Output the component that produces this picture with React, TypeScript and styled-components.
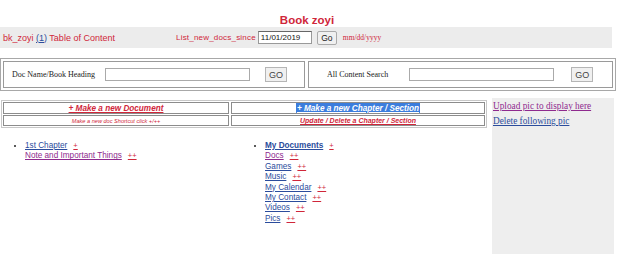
import styled, { createGlobalStyle } from "styled-components";

// ------------------ DATA ------------------
const myDocs = [
  { name: "Docs", visited: true },
  { name: "Games", visited: false },
  { name: "Music", visited: false },
  { name: "My Calendar", visited: false },
  { name: "My Contact", visited: false },
  { name: "Videos", visited: false },
  { name: "Pics", visited: false },
];

const RED = "#d0263a";
const BLUE = "#2b4c9c";
const PURPLE = "#8e2a8e";

// ------------------ PAGE ------------------
export default function App() {
  return (
    <>
      <GlobalStyle />
      <Page>
        <Title>Book zoyi</Title>

        <TopBar>
          <Crumbs>
            bk_zoyi <BlueLink>(1)</BlueLink> Table of Content
          </Crumbs>
          <SinceLabel>List_new_docs_since</SinceLabel>
          <DateInput defaultValue="11/01/2019" />
          <GoButton>Go</GoButton>
          <DateHint>mm/dd/yyyy</DateHint>
        </TopBar>

        <SearchTable>
          <SearchCell>
            <SearchLabel $indent={8}>Doc Name/Book Heading</SearchLabel>
            <SearchInput $left={10} />
            <SearchGo $left={15}>GO</SearchGo>
          </SearchCell>
          <SearchCell>
            <SearchLabel $indent={18}>All Content Search</SearchLabel>
            <SearchInput $left={21} />
            <SearchGo $left={17}>GO</SearchGo>
          </SearchCell>
        </SearchTable>

        <Body>
          <Main>
            <ActionGrid>
              <ActionCell>
                <BigAction>+ Make a new Document</BigAction>
              </ActionCell>
              <ActionCell>
                <BigAction $selected>+ Make a new Chapter / Section</BigAction>
              </ActionCell>
              <ActionCell>
                <SmallNote>Make a new doc Shortcut click +/++</SmallNote>
              </ActionCell>
              <ActionCell>
                <SmallAction>Update / Delete a Chapter / Section</SmallAction>
              </ActionCell>
            </ActionGrid>

            <Lists>
              <TreeList>
                <li>
                  <SubRow>
                    <NodeLink>1st Chapter</NodeLink>
                    <Plus>+</Plus>
                  </SubRow>
                  <SubRow>
                    <NodeLink $visited>Note and Important Things</NodeLink>
                    <Plus>++</Plus>
                  </SubRow>
                </li>
              </TreeList>
              <TreeList>
                <li>
                  <SubRow>
                    <NodeLink $bold>My Documents</NodeLink>
                    <Plus>+</Plus>
                  </SubRow>
                  {myDocs.map((d) => (
                    <SubRow key={d.name}>
                      <NodeLink $visited={d.visited}>{d.name}</NodeLink>
                      <Plus>++</Plus>
                    </SubRow>
                  ))}
                </li>
              </TreeList>
            </Lists>
          </Main>

          <PicPanel>
            <PicLink $visited>Upload pic to display here</PicLink>
            <PicLink>Delete following pic</PicLink>
          </PicPanel>
        </Body>
      </Page>
    </>
  );
}

// ------------------ STYLES ------------------
const GlobalStyle = createGlobalStyle`
  body {
    margin: 0;
    background: #fff;
    font-family: "Liberation Sans", Arial, sans-serif;
  }
`;

const Page = styled.div`
  width: 614px;
  padding-top: 13px;
`;

const Title = styled.h1`
  margin: 0;
  text-align: center;
  font-size: 11.5px;
  line-height: 14px;
  font-weight: bold;
  color: ${RED};
`;

const TopBar = styled.div`
  height: 21px;
  width: 612px;
  background: #ececec;
  display: flex;
  align-items: center;
  color: ${RED};
`;

const Crumbs = styled.span`
  margin-left: 3px;
  width: 173px;
  font-size: 9px;
`;

const BlueLink = styled.a`
  color: ${BLUE};
  text-decoration: underline;
`;

const SinceLabel = styled.span`
  font-size: 8px;
  letter-spacing: 0.2px;
`;

const DateInput = styled.input`
  margin-left: 2px;
  width: 48px;
  height: 9px;
  padding: 1px 2px;
  border: 1px solid #999;
  border-top-color: #666;
  font-family: "Liberation Sans", Arial, sans-serif;
  font-size: 8px;
  color: #111;
`;

const GoButton = styled.button`
  margin-left: 5px;
  width: 20px;
  height: 14px;
  padding: 0;
  border: 1px solid #aaa;
  border-radius: 2px;
  background: #f0f0f0;
  font-family: "Liberation Sans", Arial, sans-serif;
  font-size: 8.5px;
  color: #222;
`;

const DateHint = styled.span`
  margin-left: 6px;
  font-family: "Liberation Serif", "Times New Roman", serif;
  font-size: 7.5px;
`;

const SearchTable = styled.div`
  margin-top: 10px;
  width: 610px;
  height: 27px;
  padding: 2px;
  border: 1px solid #a8a8a8;
  display: grid;
  grid-template-columns: 302px 1fr;
  gap: 3px;
`;

const SearchCell = styled.div`
  border: 1px solid #9a9a9a;
  display: flex;
  align-items: center;
`;

const SearchLabel = styled.span<{ $indent: number }>`
  margin-left: ${(p) => p.$indent}px;
  font-family: "Liberation Serif", "Times New Roman", serif;
  font-size: 8px;
  color: #222;
`;

const SearchInput = styled.input<{ $left: number }>`
  margin-left: ${(p) => p.$left}px;
  width: 141px;
  height: 9px;
  padding: 1px;
  border: 1px solid #aaa;
`;

const SearchGo = styled.button<{ $left: number }>`
  margin-left: ${(p) => p.$left}px;
  width: 22px;
  height: 15px;
  padding: 0;
  border: 1px solid #b5b5b5;
  background: #f0f0f0;
  font-family: "Liberation Sans", Arial, sans-serif;
  font-size: 9px;
  color: #444;
`;

const Body = styled.div`
  margin-top: 8px;
  display: flex;
  align-items: flex-start;
`;

const Main = styled.div`
  width: 492px;
`;

const ActionGrid = styled.div`
  margin: 1px 0 0 1px;
  width: 482px;
  padding: 1px;
  border: 1px solid #c8c8c8;
  display: grid;
  grid-template-columns: 226px 1fr;
  grid-template-rows: 12px 11px;
  gap: 1px 2px;
`;

const ActionCell = styled.div`
  border: 1px solid #8c8c8c;
  display: flex;
  align-items: center;
  justify-content: center;
  overflow: hidden;
`;

const BigAction = styled.a<{ $selected?: boolean }>`
  font-size: 8.2px;
  line-height: 11px;
  font-weight: bold;
  font-style: italic;
  text-decoration: underline;
  color: ${(p) => (p.$selected ? "#fff" : RED)};
  background: ${(p) => (p.$selected ? "#3b7ddd" : "transparent")};
  padding: 0 ${(p) => (p.$selected ? "1px" : "0")};
`;

const SmallNote = styled.span`
  font-size: 5.6px;
  font-style: italic;
  color: ${RED};
`;

const SmallAction = styled.a`
  font-size: 7px;
  font-weight: bold;
  font-style: italic;
  text-decoration: underline;
  color: ${RED};
`;

const Lists = styled.div`
  margin-top: 13px;
  display: grid;
  grid-template-columns: 240px 1fr;
`;

const TreeList = styled.ul`
  margin: 0;
  padding-left: 25px;
  font-size: 8.2px;
  line-height: 10.4px;
  list-style: disc;
  color: #222;
`;

const SubRow = styled.div`
  height: 10.4px;
  white-space: nowrap;
`;

const NodeLink = styled.a<{ $visited?: boolean; $bold?: boolean }>`
  color: ${(p) => (p.$visited ? PURPLE : BLUE)};
  font-weight: ${(p) => (p.$bold ? "bold" : "normal")};
  text-decoration: underline;
`;

const Plus = styled.a`
  margin-left: 6px;
  color: ${RED};
  text-decoration: underline;
  font-size: 7.5px;
`;

const PicPanel = styled.div`
  flex: 1;
  margin-top: -1px;
  height: 153px;
  background: #eeeeee;
  padding: 3px 0 0 1px;
  display: flex;
  flex-direction: column;
  gap: 4px;
`;

const PicLink = styled.a<{ $visited?: boolean }>`
  font-family: "Liberation Serif", "Times New Roman", serif;
  font-size: 9.3px;
  line-height: 11px;
  color: ${(p) => (p.$visited ? PURPLE : BLUE)};
  text-decoration: underline;
`;
